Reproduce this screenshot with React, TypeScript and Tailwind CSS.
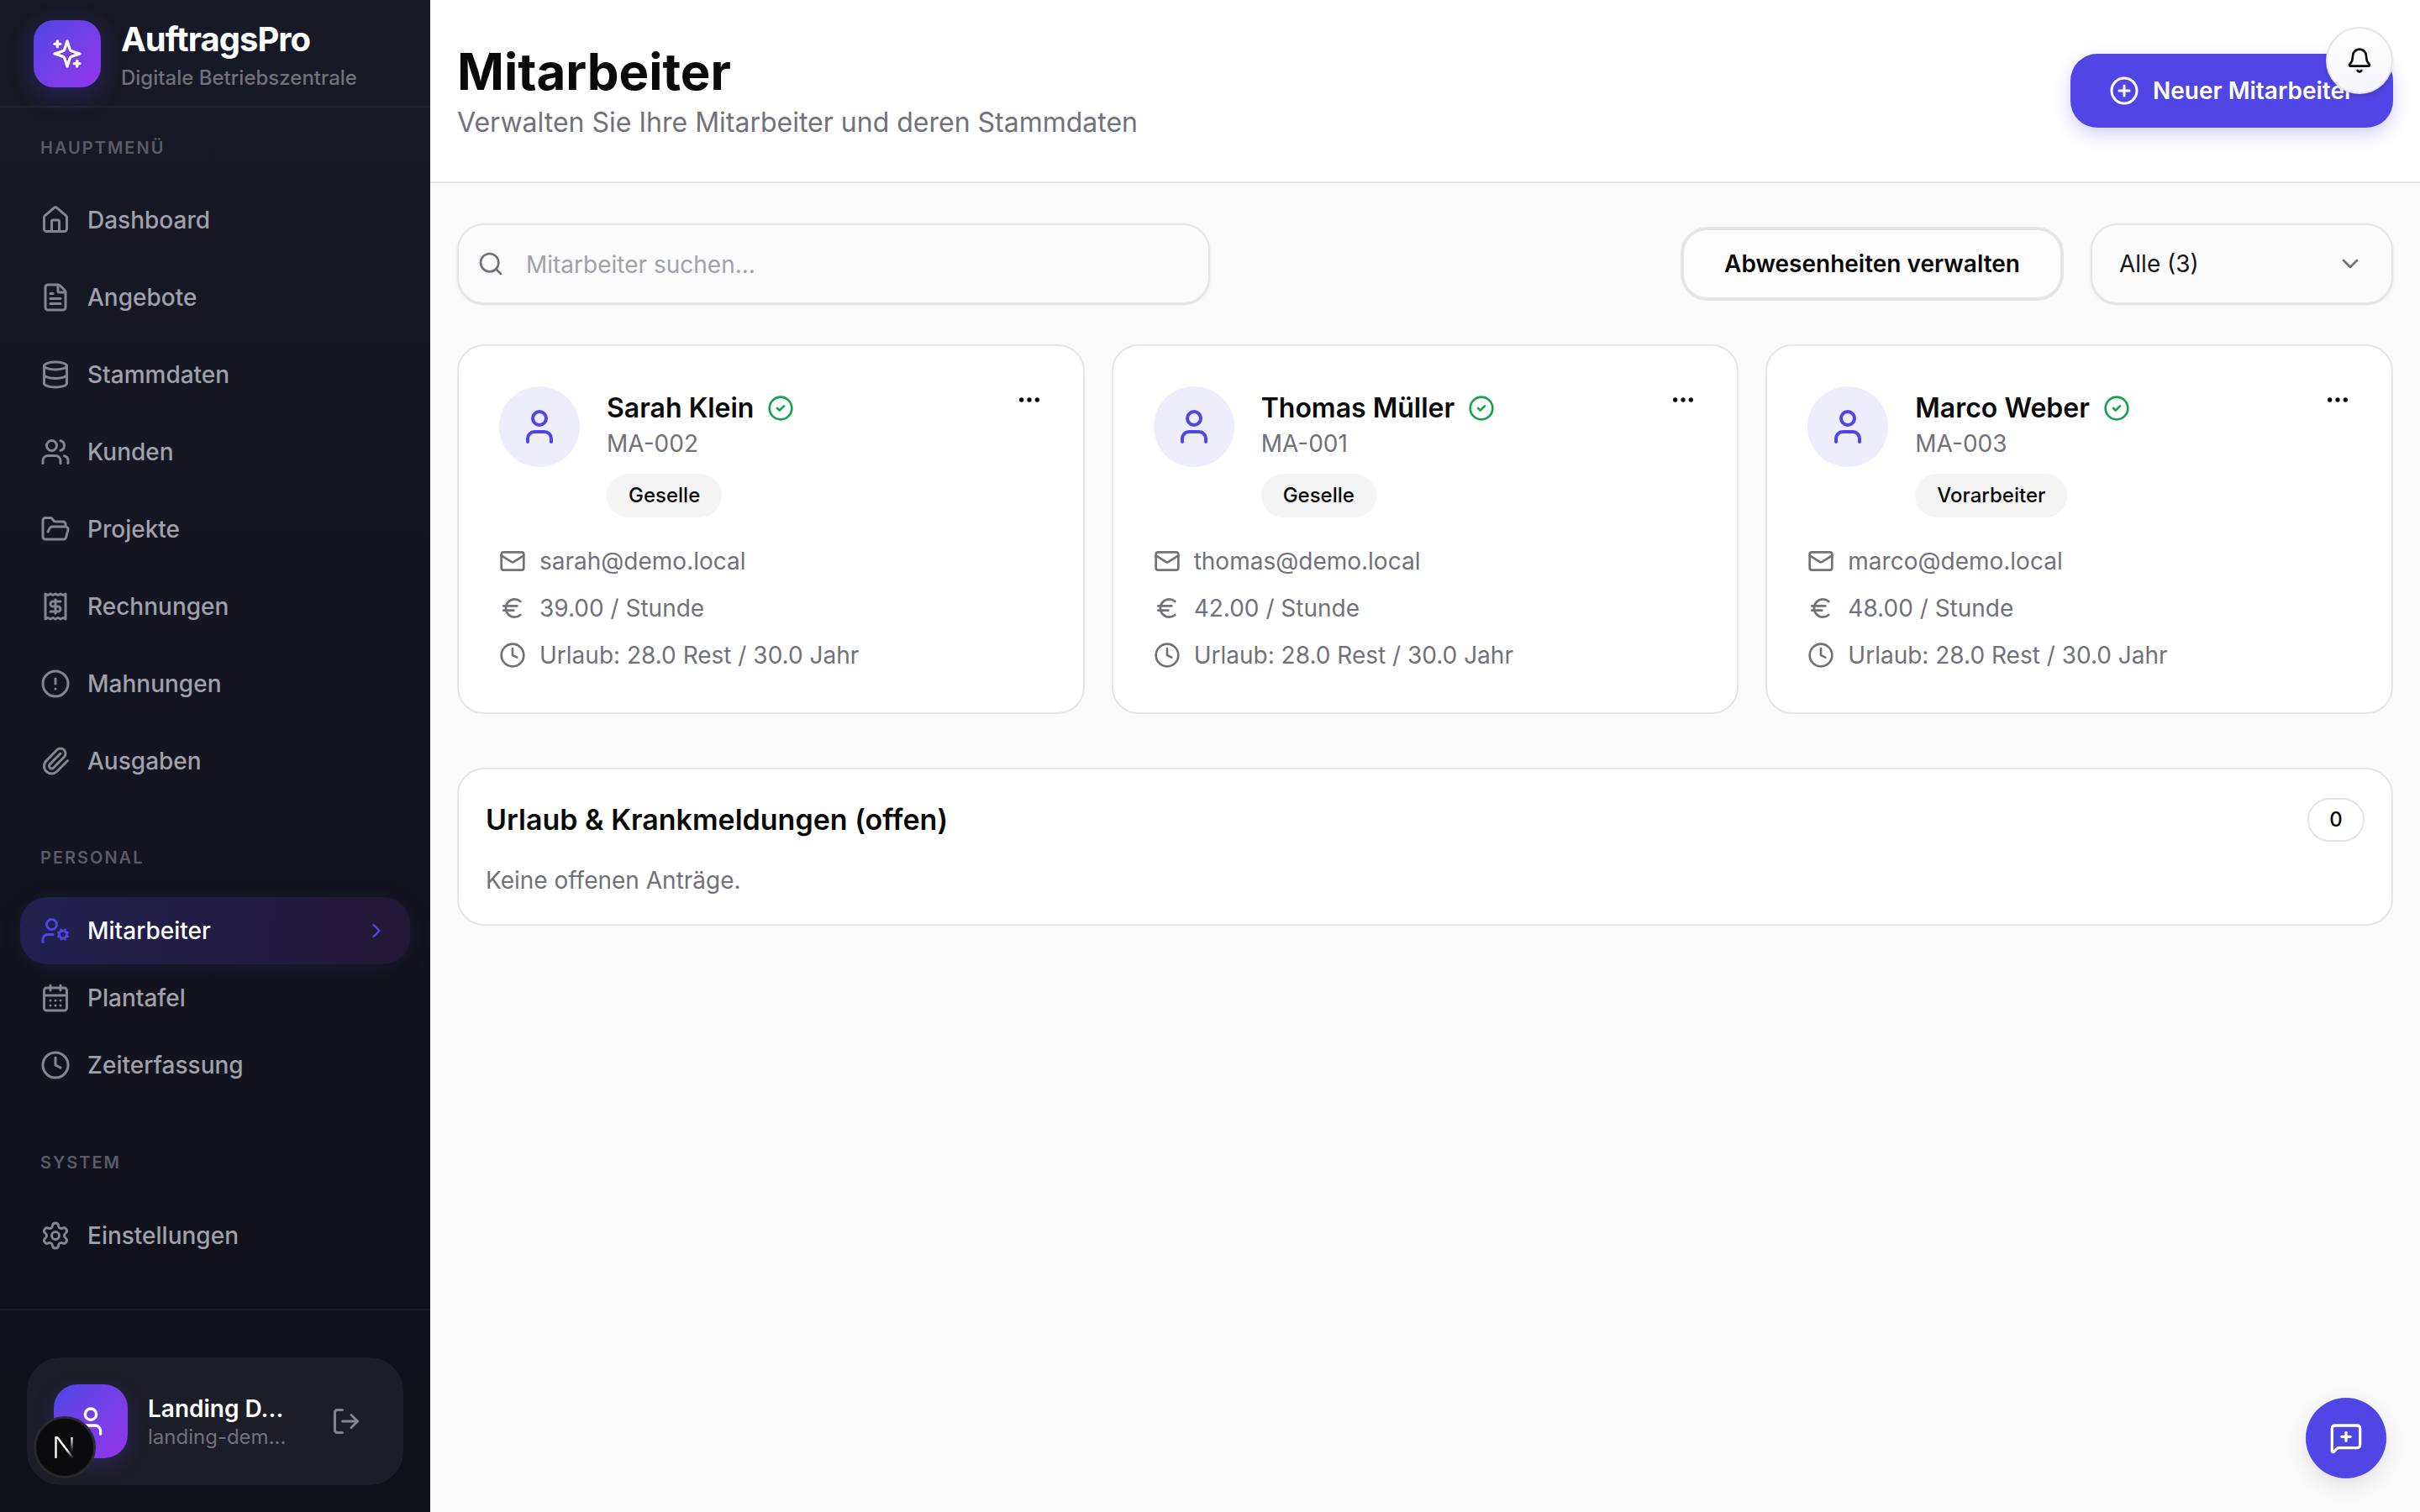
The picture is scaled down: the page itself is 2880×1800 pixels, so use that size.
import React from 'react';
import {
  Bell,
  CalendarDays,
  ChevronDown,
  ChevronRight,
  CircleAlert,
  CircleCheck,
  CirclePlus,
  Clock,
  Database,
  Ellipsis,
  Euro,
  FileText,
  FolderOpen,
  House,
  LogOut,
  Mail,
  MessageSquarePlus,
  Paperclip,
  Receipt,
  Search,
  Settings,
  User,
  UserCog,
  Users,
} from 'lucide-react';

type NavEntry = { label: string; icon: React.ElementType };

const mainNav: NavEntry[] = [
  { label: 'Dashboard', icon: House },
  { label: 'Angebote', icon: FileText },
  { label: 'Stammdaten', icon: Database },
  { label: 'Kunden', icon: Users },
  { label: 'Projekte', icon: FolderOpen },
  { label: 'Rechnungen', icon: Receipt },
  { label: 'Mahnungen', icon: CircleAlert },
  { label: 'Ausgaben', icon: Paperclip },
];

const employees = [
  { name: 'Sarah Klein', id: 'MA-002', role: 'Geselle', mail: 'sarah@demo.local', rate: '39.00 / Stunde' },
  { name: 'Thomas Müller', id: 'MA-001', role: 'Geselle', mail: 'thomas@demo.local', rate: '42.00 / Stunde' },
  { name: 'Marco Weber', id: 'MA-003', role: 'Vorarbeiter', mail: 'marco@demo.local', rate: '48.00 / Stunde' },
];

// star with the two small plus marks, as in the logo tile
const LogoStar = () => (
  <svg width="40" height="40" viewBox="0 0 24 24" fill="none" stroke="white" strokeWidth="2" strokeLinecap="round" strokeLinejoin="round">
    <path d="m12 3-1.912 5.813a2 2 0 0 1-1.275 1.275L3 12l5.813 1.912a2 2 0 0 1 1.275 1.275L12 21l1.912-5.813a2 2 0 0 1 1.275-1.275L21 12l-5.813-1.912a2 2 0 0 1-1.275-1.275L12 3Z" />
    <path d="M5 3v4" />
    <path d="M19 17v4" />
    <path d="M3 5h4" />
    <path d="M17 19h4" />
  </svg>
);

const NextMark = () => (
  <svg width="30" height="30" viewBox="0 0 30 30" fill="none">
    <defs>
      <linearGradient id="next-diagonal" x1="8" y1="4" x2="25" y2="28" gradientUnits="userSpaceOnUse">
        <stop offset="0.55" stopColor="white" />
        <stop offset="1" stopColor="white" stopOpacity="0" />
      </linearGradient>
      <linearGradient id="next-right" x1="23" y1="3" x2="23" y2="20" gradientUnits="userSpaceOnUse">
        <stop stopColor="white" />
        <stop offset="1" stopColor="white" stopOpacity="0" />
      </linearGradient>
    </defs>
    <path d="M4.5 28V3.5h2L25 28" stroke="url(#next-diagonal)" strokeWidth="2.4" />
    <path d="M23.5 3v17" stroke="url(#next-right)" strokeWidth="2.4" />
  </svg>
);

const NavItem = ({ label, icon: Icon, tall }: NavEntry & { tall?: boolean }) => (
  <div className={`mx-6 flex items-center gap-5 px-6 text-[28px] font-medium text-[#a1a1aa] ${tall ? 'h-[92px]' : 'h-20'}`}>
    <Icon size={36} className="shrink-0 text-[#85858d]" />
    <span>{label}</span>
  </div>
);

const SectionLabel = ({ children }: { children: React.ReactNode }) => (
  <div className="px-12 text-[20px] leading-8 font-semibold tracking-[2px] text-[#5b5b65] uppercase">{children}</div>
);

const Sidebar = () => (
  <aside className="flex h-[1800px] w-[512px] shrink-0 flex-col bg-gradient-to-b from-[#181926] to-[#0f1018]">
    <div className="flex h-[128px] items-center gap-6 border-b-2 border-[#22232e] px-10 pt-[2px]">
      <div className="flex h-20 w-20 items-center justify-center rounded-3xl bg-gradient-to-br from-[#4f46e5] to-[#9333ea] shadow-[0_8px_30px_rgba(79,70,229,0.3)]">
        <LogoStar />
      </div>
      <div className="pt-1">
        <div className="text-[40px] leading-[48px] font-bold tracking-[-1px] text-white">AuftragsPro</div>
        <div className="mt-[6px] text-[24px] leading-8 font-medium text-[#71717a]">Digitale Betriebszentrale</div>
      </div>
    </div>

    <div className="mt-8">
      <SectionLabel>Hauptmenü</SectionLabel>
    </div>
    <nav className="mt-6">
      {mainNav.map((item) => (
        <NavItem key={item.label} {...item} tall />
      ))}
    </nav>

    <div className="mt-[53px]">
      <SectionLabel>Personal</SectionLabel>
    </div>
    <nav className="mt-[31px]">
      <div className="mx-6 flex h-20 items-center gap-5 rounded-[32px] bg-gradient-to-r from-[#4f46e5]/25 to-[#9333ea]/12 px-6 text-[28px] font-medium text-white shadow-[0_4px_24px_rgba(79,70,229,0.1)]">
        <UserCog size={36} className="shrink-0 text-[#4f46e5]" />
        <span className="flex-1">Mitarbeiter</span>
        <ChevronRight size={28} className="mr-0.5 text-[#4f46e5]" />
      </div>
      <NavItem label="Plantafel" icon={CalendarDays} />
      <NavItem label="Zeiterfassung" icon={Clock} />
    </nav>

    <div className="mt-[60px]">
      <SectionLabel>System</SectionLabel>
    </div>
    <nav className="mt-[31px]">
      <NavItem label="Einstellungen" icon={Settings} />
    </nav>

    <div className="mt-auto border-t-2 border-[#1c1d27] px-8 pt-14 pb-8">
      <div className="relative flex h-[152px] items-center gap-6 rounded-[40px] bg-[#1c1d26] px-8">
        <div className="flex h-[88px] w-[88px] shrink-0 items-center justify-center rounded-[28px] bg-gradient-to-br from-[#4f46e5] to-[#9333ea] shadow-[0_8px_24px_rgba(79,70,229,0.25)]">
          <User size={40} className="text-white" />
        </div>
        <div className="w-[170px] pt-0.5">
          <div className="text-[28px] leading-9 font-semibold text-white">Landing D...</div>
          <div className="text-[24px] leading-8 text-[#71717a]">landing-dem...</div>
        </div>
        <LogOut size={36} className="ml-6 shrink-0 text-[#85858d]" />
        <div className="absolute top-[70px] left-2 flex h-[74px] w-[74px] items-center justify-center rounded-full border-[3px] border-[#2a2a2e] bg-[#0b0b0d]">
          <NextMark />
        </div>
      </div>
    </div>
  </aside>
);

const EmployeeCard = ({ name, id, role, mail, rate }: (typeof employees)[number]) => (
  <div className="h-[440px] rounded-[32px] border-2 border-[#e5e5e5] bg-white p-12">
    <div className="flex">
      <div className="flex h-24 w-24 shrink-0 items-center justify-center rounded-full bg-[#eeedfd]">
        <User size={48} className="text-[#4f46e5]" />
      </div>
      <div className="ml-8 flex-1">
        <div className="mt-0.5 flex h-12 items-center gap-4">
          <span className="text-[32px] font-semibold text-[#0a0a0a]">{name}</span>
          <CircleCheck size={32} className="text-[#16a34a]" />
        </div>
        <div className="-mt-0.5 text-[28px] leading-10 text-[#71717a]">{id}</div>
        <div className="mt-4 flex">
          <span className="flex h-[52px] items-center rounded-full bg-[#f4f4f5] px-[26px] text-[24px] font-medium text-[#0a0a0a]">
            {role}
          </span>
        </div>
      </div>
      <Ellipsis size={32} className="text-[#0a0a0a]" />
    </div>
    <div className="mt-8 flex flex-col gap-4 text-[28px] leading-10 text-[#71717a]">
      <div className="flex items-center gap-4">
        <Mail size={32} className="shrink-0" />
        <span>{mail}</span>
      </div>
      <div className="flex items-center gap-4">
        <Euro size={32} className="shrink-0" />
        <span>{rate}</span>
      </div>
      <div className="flex items-center gap-4">
        <Clock size={32} className="shrink-0" />
        <span>Urlaub: 28.0 Rest / 30.0 Jahr</span>
      </div>
    </div>
  </div>
);

export default function App() {
  return (
    <div className="relative flex h-[1800px] w-[2880px] overflow-hidden bg-[#fbfbfb] font-['Inter',sans-serif] text-[#0a0a0a]">
      <Sidebar />
      <main className="flex-1">
        <header className="flex h-[218px] items-center justify-between border-b-2 border-[#e5e5e5] bg-white pr-8 pl-8">
          <div className="-mt-[2px]">
            <h1 className="mb-[5px] text-[60px] leading-[72px] font-bold">Mitarbeiter</h1>
            <p className="text-[32px] leading-10 text-[#71717a]">Verwalten Sie Ihre Mitarbeiter und deren Stammdaten</p>
          </div>
          <button className="flex h-[88px] w-[384px] items-center gap-4 rounded-[32px] bg-[#4f46e5] pl-[46px] text-[28px] font-semibold text-white shadow-[0_8px_20px_rgba(79,70,229,0.25)]">
            <CirclePlus size={36} />
            Neuer Mitarbeiter
          </button>
        </header>

        <div className="px-8 pt-12">
          <div className="flex items-center justify-between">
            <div className="flex h-[96px] w-[896px] items-center gap-[26px] rounded-[32px] border-2 border-[#e5e5e5] bg-[#fbfbfb] pr-6 pl-[22px] text-[28px] text-[#a1a1aa] shadow-sm">
              <Search size={32} className="text-[#71717a]" />
              <span className="pt-0.5">Mitarbeiter suchen...</span>
            </div>
            <div className="flex items-center gap-8">
              <button className="h-[88px] w-[456px] rounded-[32px] border-4 border-[#e5e5e5] bg-[#fdfdfd] text-[28px] font-semibold">
                Abwesenheiten verwalten
              </button>
              <div className="flex h-[96px] w-[360px] items-center justify-between rounded-[32px] border-2 border-[#e5e5e5] bg-[#fbfbfb] pr-[33px] pl-8 text-[28px] text-[#18181b] shadow-sm">
                <span>Alle (3)</span>
                <ChevronDown size={32} className="text-[#71717a]" />
              </div>
            </div>
          </div>

          <div className="mt-[48px] grid grid-cols-3 gap-8">
            {employees.map((employee) => (
              <EmployeeCard key={employee.id} {...employee} />
            ))}
          </div>

          <section className="mt-[64px] h-[188px] rounded-[32px] border-2 border-[#e5e5e5] bg-white px-8 pt-[34px]">
            <div className="flex items-center justify-between">
              <h2 className="text-[34px] leading-[52px] font-semibold">Urlaub &amp; Krankmeldungen (offen)</h2>
              <span className="flex h-[52px] w-[68px] items-center justify-center rounded-full border-2 border-[#e5e5e5] text-[24px] font-medium">
                0
              </span>
            </div>
            <p className="mt-[26px] text-[28px] leading-10 text-[#71717a]">Keine offenen Anträge.</p>
          </section>
        </div>
      </main>

      <button className="absolute top-8 right-8 flex h-20 w-20 items-center justify-center rounded-full border-2 border-[#e5e5e5] bg-gradient-to-b from-white to-[#f5f5fd] shadow-md">
        <Bell size={32} className="text-[#0a0a0a]" />
      </button>
      <button className="absolute right-10 bottom-10 flex h-24 w-24 items-center justify-center rounded-full bg-[#4f46e5] shadow-[0_8px_24px_rgba(0,0,0,0.12)]">
        <MessageSquarePlus size={40} className="text-white" />
      </button>
    </div>
  );
}
